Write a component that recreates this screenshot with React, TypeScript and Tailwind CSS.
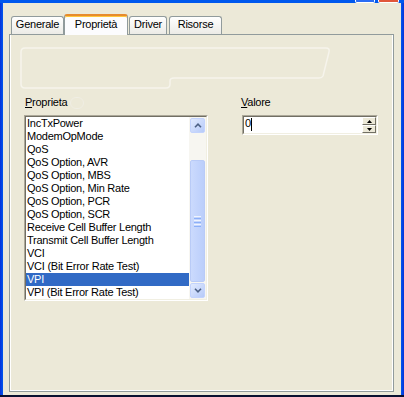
const items = [
  'IncTxPower',
  'ModemOpMode',
  'QoS',
  'QoS Option, AVR',
  'QoS Option, MBS',
  'QoS Option, Min Rate',
  'QoS Option, PCR',
  'QoS Option, SCR',
  'Receive Cell Buffer Length',
  'Transmit Cell Buffer Length',
  'VCI',
  'VCI (Bit Error Rate Test)',
  'VPI',
  'VPI (Bit Error Rate Test)',
]

const selected = 'VPI'

function Chevron({ up }: { up: boolean }) {
  return (
    <svg width="8" height="5" viewBox="0 0 8 5">
      <path
        d={up ? 'M1 4.2 L4 1.2 L7 4.2' : 'M1 0.8 L4 3.8 L7 0.8'}
        fill="none"
        stroke="#4D6185"
        strokeWidth="1.6"
      />
    </svg>
  )
}

function ScrollButton({ up }: { up: boolean }) {
  return (
    <div className="mx-auto flex h-[15px] w-[15px] items-center justify-center rounded-[2px] border border-[#C3D3FD] bg-[linear-gradient(to_bottom_right,#E1EAFE,#B6CAF9)]">
      <Chevron up={up} />
    </div>
  )
}

function SpinButton({ up }: { up: boolean }) {
  return (
    <div className="flex h-[8px] w-[14px] items-center justify-center border border-t-white border-l-white border-b-[#716F64] border-r-[#716F64] bg-[#ECE9D8]">
      <svg width="5" height="3" viewBox="0 0 5 3">
        <path d={up ? 'M2.5 0 L5 3 L0 3 Z' : 'M0 0 L5 0 L2.5 3 Z'} fill="#000" />
      </svg>
    </div>
  )
}

export default function App() {
  return (
    <div className="flex h-[397px] w-[404px] flex-col overflow-hidden bg-[#0831D9] font-['Liberation_Sans',Arial,sans-serif] text-[11px] leading-[13px] tracking-[-0.25px] text-black">
      {/* title bar remains */}
      <div className="flex h-[3px] shrink-0 bg-[#0058EE]">
        <div className="ml-[355px] h-[3px] w-[20px] rounded-b-[2px] border-x border-b border-white bg-[#2A6CF4]" />
        <div className="ml-[3px] h-[3px] w-[21px] rounded-b-[2px] border-x border-b border-white bg-[#E0563A]" />
      </div>

      <div className="flex flex-1">
        <div className="w-[3px] bg-[linear-gradient(to_right,#0831D9,#0058EE)]" />

        <div className="flex flex-1 flex-col bg-[#ECE9D8] pl-[6px] pt-[11px]">
          {/* tabs */}
          <div className="ml-[2px] flex h-[20px] items-end">
            <div className="h-[18px] w-[53px] rounded-t-[3px] border border-b-0 border-[#919B9C] bg-[linear-gradient(to_bottom,#FFFFFF,#ECEBE6)] pt-[1px] text-center">
              Generale
            </div>
            <div className="relative z-10 mb-[-1px] h-[21px] w-[64px] rounded-t-[3px] border-x border-[#919B9C] border-t-2 border-t-[#E68B2C] bg-[#FCFCFE] pt-[2px] text-center shadow-[inset_0_1px_0_#FFC73C]">
              Proprietà
            </div>
            <div className="ml-[1px] h-[18px] w-[38px] rounded-t-[3px] border border-b-0 border-[#919B9C] bg-[linear-gradient(to_bottom,#FFFFFF,#ECEBE6)] pt-[1px] text-center">
              Driver
            </div>
            <div className="ml-[2px] h-[18px] w-[53px] rounded-t-[3px] border border-b-0 border-[#919B9C] bg-[linear-gradient(to_bottom,#FFFFFF,#ECEBE6)] pt-[1px] text-center">
              Risorse
            </div>
          </div>

          {/* panel */}
          <div className="h-[358px] w-[385px] border border-[#919B9C]">
            <div className="flex h-full flex-col border-b border-r border-l border-white pt-[12px]">
              <svg width="312" height="42" viewBox="0 0 312 42" className="ml-[9px]">
                <path
                  d="M5 1 H306 Q310 1 309 5 L303 29 Q302 31 299 31 H154 Q150 31 150 34 V37 Q150 41 146 41 H5 Q1 41 1 37 V5 Q1 1 5 1 Z"
                  fill="none"
                  stroke="#F6F4EC"
                  strokeWidth="1.5"
                />
              </svg>

              <div className="ml-[13px] mt-[7px] flex">
                {/* Proprieta */}
                <div className="flex w-[184px] flex-col">
                  <div className="mb-[6px] flex h-[13px] items-center gap-[3px] pl-[1px]">
                    <span>
                      <span className="underline underline-offset-[1px]">P</span>roprieta
                    </span>
                    <span className="h-[12px] w-[14px] rounded-full border border-[#F0EEE4]" />
                  </div>
                  <div className="h-[186px] border border-t-[#ACA899] border-l-[#ACA899] border-b-white border-r-white">
                    <div className="flex h-full border border-t-[#716F64] border-l-[#716F64] border-b-[#F1EFE2] border-r-[#F1EFE2] bg-white">
                      <div className="flex flex-1 flex-col">
                        {items.map((item) => (
                          <div
                            key={item}
                            className={`h-[13px] whitespace-nowrap pl-[1px] ${
                              item === selected ? 'bg-[#316AC5] text-white' : ''
                            }`}
                          >
                            {item}
                          </div>
                        ))}
                      </div>
                      {/* scrollbar */}
                      <div className="flex w-[17px] flex-col bg-[#F7F6F1] py-[1px]">
                        <ScrollButton up />
                        <div className="h-[27px]" />
                        <div className="mx-auto flex h-[122px] w-[15px] flex-col items-center justify-center gap-[1px] rounded-[2px] border border-[#B9CBF7] bg-[linear-gradient(to_right,#CBDAFD,#BBCEFB)]">
                          <div className="h-px w-[7px] bg-[#EEF4FE]" />
                          <div className="h-px w-[7px] bg-[#8CB0F8]" />
                          <div className="h-px w-[7px] bg-[#EEF4FE]" />
                          <div className="h-px w-[7px] bg-[#8CB0F8]" />
                          <div className="h-px w-[7px] bg-[#EEF4FE]" />
                          <div className="h-px w-[7px] bg-[#8CB0F8]" />
                        </div>
                        <div className="flex-1" />
                        <ScrollButton up={false} />
                      </div>
                    </div>
                  </div>
                </div>

                {/* Valore */}
                <div className="ml-[33px] flex flex-col">
                  <div className="mb-[6px] h-[13px]">
                    <span className="underline underline-offset-[1px]">V</span>alore
                  </div>
                  <div className="ml-[1px] h-[20px] w-[136px] border border-t-[#ACA899] border-l-[#ACA899] border-b-white border-r-white">
                    <div className="flex h-full border border-t-[#716F64] border-l-[#716F64] border-b-[#F1EFE2] border-r-[#F1EFE2] bg-white">
                      <div className="flex flex-1 items-start pl-[1px]">
                        <span>0</span>
                        <span className="mt-[1px] h-[13px] w-px bg-black" />
                      </div>
                      <div className="flex flex-col">
                        <SpinButton up />
                        <SpinButton up={false} />
                      </div>
                    </div>
                  </div>
                </div>
              </div>
            </div>
          </div>
        </div>

        <div className="w-[3px] bg-[linear-gradient(to_right,#0058EE,#0831D9)]" />
      </div>

      <div className="h-[2px] shrink-0 bg-[#0A1030]" />
    </div>
  )
}
